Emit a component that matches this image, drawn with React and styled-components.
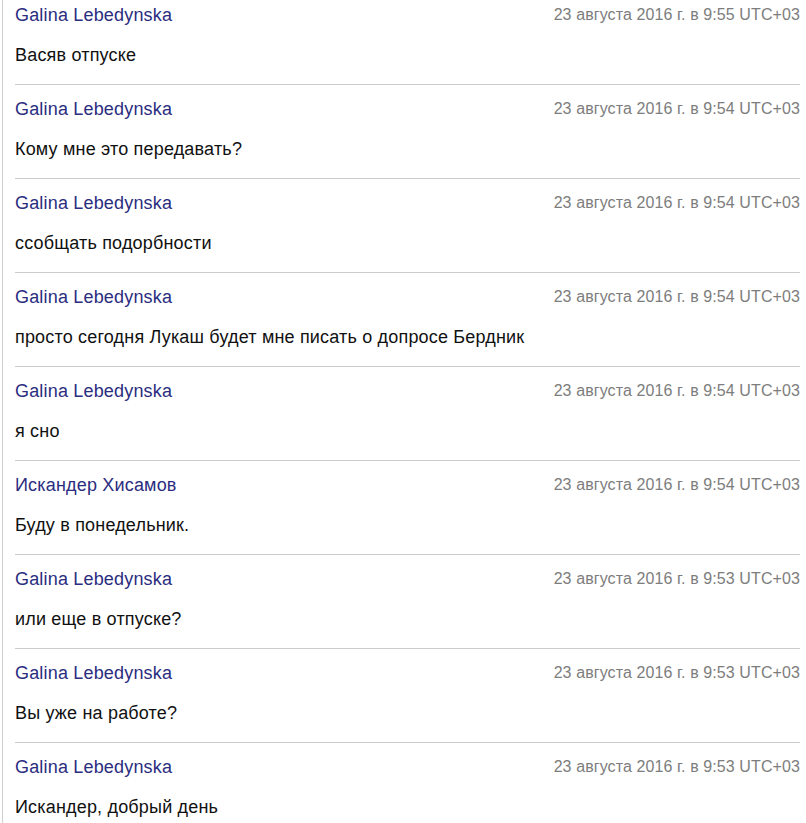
import React from 'react';
import styled, { createGlobalStyle } from 'styled-components';

const messages = [
  { author: 'Galina Lebedynska', time: '9:55', text: 'Васяв отпуске' },
  { author: 'Galina Lebedynska', time: '9:54', text: 'Кому мне это передавать?' },
  { author: 'Galina Lebedynska', time: '9:54', text: 'ссобщать подорбности' },
  { author: 'Galina Lebedynska', time: '9:54', text: 'просто сегодня Лукаш будет мне писать о допросе Бердник' },
  { author: 'Galina Lebedynska', time: '9:54', text: 'я сно' },
  { author: 'Искандер Хисамов', time: '9:54', text: 'Буду в понедельник.' },
  { author: 'Galina Lebedynska', time: '9:53', text: 'или еще в отпуске?' },
  { author: 'Galina Lebedynska', time: '9:53', text: 'Вы уже на работе?' },
  { author: 'Galina Lebedynska', time: '9:53', text: 'Искандер, добрый день' },
];

function App() {
  return (
    <>
      <GlobalStyle />
      <Page>
        <Thread>
          {messages.map((m, i) => (
            <Item key={i}>
              <Header>
                <Author>{m.author}</Author>
                <Time>23 августа 2016 г. в {m.time} UTC+03</Time>
              </Header>
              <Text>{m.text}</Text>
            </Item>
          ))}
        </Thread>
      </Page>
    </>
  );
}

const GlobalStyle = createGlobalStyle`
  html, body {
    margin: 0;
    padding: 0;
    background: #fff;
    overflow: hidden;
  }
`;

const Page = styled.div`
  width: 806px;
  height: 823px;
  overflow: hidden;
  font-family: Arial, "Liberation Sans", sans-serif;
`;

const Thread = styled.div`
  margin: -9px 0 0 2px;
  padding: 0 6px 0 12px;
  border-left: 1px solid #cfcfcf;
`;

const Item = styled.div`
  padding: 14px 0 19px;
  border-bottom: 1px solid #cccccc;
`;

const Header = styled.div`
  display: flex;
  justify-content: space-between;
  align-items: flex-start;
  height: 20px;
  margin-bottom: 20px;
`;

const Author = styled.div`
  font-size: 18px;
  line-height: 20px;
  letter-spacing: 0.18px;
  color: #2b2d80;
`;

const Time = styled.div`
  font-size: 16px;
  line-height: 20px;
  letter-spacing: 0.1px;
  color: #7d7d7d;
`;

const Text = styled.div`
  font-size: 18px;
  line-height: 20px;
  letter-spacing: 0.18px;
  color: #111;
`;

export default App;
